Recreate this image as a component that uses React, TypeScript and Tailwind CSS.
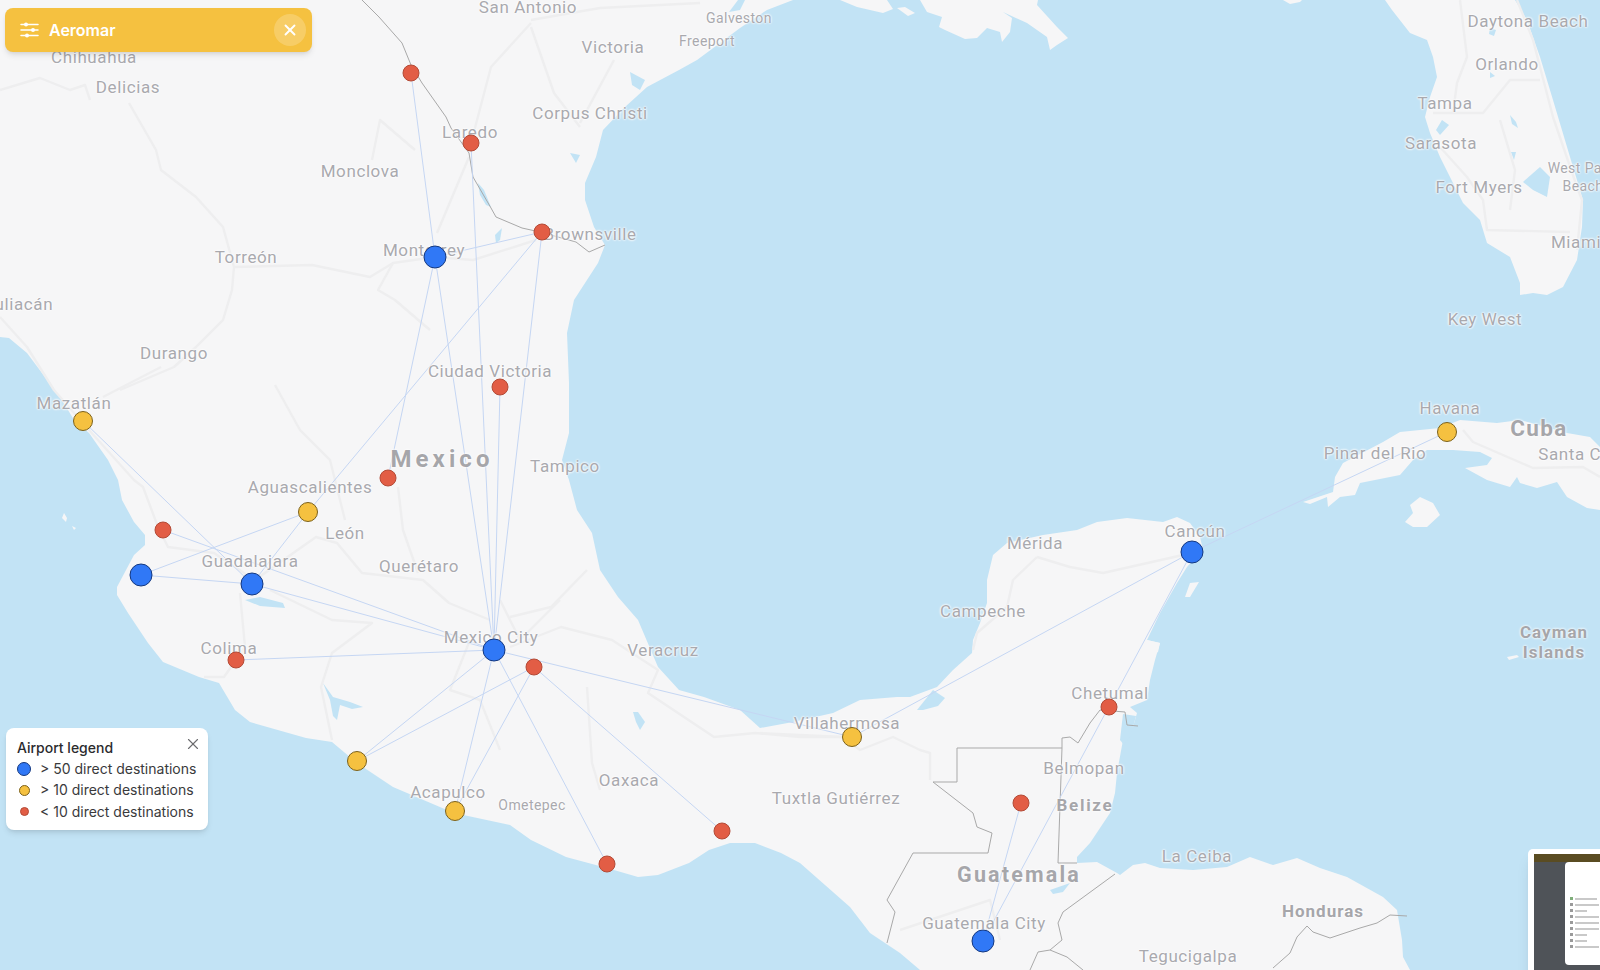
import { X } from "lucide-react";

const land =
  "0,0 793,0 767,10 740,28 720,43 697,60 679,70 647,87 625,107 603,130 596,157 585,183 585,200 594,227 605,245 598,263 574,300 567,333 569,383 569,433 562,460 569,480 577,510 592,533 600,570 618,597 638,620 658,667 679,690 704,697 740,710 760,728 793,722 833,713 860,700 897,697 910,697 937,687 953,670 972,653 973,640 980,623 987,603 987,580 993,555 1007,543 1043,535 1077,530 1097,522 1127,518 1163,522 1177,517 1190,523 1200,537 1203,550 1193,560 1187,567 1177,583 1160,613 1147,640 1160,643 1155,660 1150,680 1147,700 1130,707 1137,713 1133,727 1123,740 1117,773 1115,793 1110,813 1090,843 1077,857 1077,863 1097,862 1117,873 1120,875 1133,865 1145,863 1160,868 1193,870 1227,867 1250,857 1273,865 1297,858 1320,868 1347,877 1383,897 1397,910 1402,940 1403,957 1410,970 920,970 900,953 870,933 850,907 800,863 781,853 755,843 730,843 709,850 689,863 658,875 638,877 607,868 566,857 531,840 510,825 454,813 393,787 357,763 332,742 306,738 250,722 235,710 219,683 199,677 163,662 148,643 128,613 117,595 117,587 134,555 145,545 145,535 134,522 122,500 118,480 108,460 89,433 74,420 62,400 45,377 27,353 9,338 0,337";

const islands = [
  // louisiana
  "840,0 857,7 883,13 893,9 887,0",
  "897,8 905,7 915,13 908,16",
  "920,0 927,12 942,17 939,27 945,30 965,39 977,38 987,28 1000,32 1002,42 1010,32 1012,18 1003,12 1027,23 1047,37 1050,50 1057,45 1068,38 1057,27 1037,5 1038,0",
  "1283,0 1290,4 1300,2 1302,0",
  // florida
  "1385,0 1392,10 1410,33 1427,40 1433,57 1437,77 1430,97 1425,117 1430,133 1440,157 1450,177 1463,203 1480,220 1487,243 1510,257 1520,283 1520,295 1533,293 1547,295 1563,287 1577,260 1582,227 1583,200 1570,157 1553,100 1540,57 1527,20 1515,0",
  // cuba
  "1303,502 1333,492 1335,477 1343,463 1383,442 1400,432 1440,428 1460,420 1497,423 1520,420 1567,433 1590,437 1600,447 1600,510 1587,508 1567,497 1557,482 1537,488 1520,483 1517,477 1510,487 1487,480 1465,468 1487,465 1492,458 1480,452 1453,450 1427,450 1413,460 1400,475 1360,483 1355,495 1340,497 1328,507 1327,497 1310,504",
  "1405,522 1413,513 1410,505 1420,497 1433,503 1440,515 1427,527 1413,527",
  "1507,657 1517,655 1519,657 1509,660",
  // cozumel and the small ones
  "1185,597 1190,583 1199,582 1190,597",
  "1147,640 1160,643 1158,652 1150,655",
  "64,513 67,518 66,522 62,518",
  "72,526 76,528 74,530",
];

const lakes = [
  "917,710 933,690 945,698 938,706 923,710",
  "245,600 260,597 283,603 285,608 260,606",
  "323,683 328,690 333,697 350,702 363,707 352,709 340,705 337,720 333,716 330,700",
  "1050,890 1070,883 1063,892 1053,894",
  "478,183 484,190 491,207 486,205 480,195",
  "495,235 502,228 500,240 496,243",
  "1523,182 1540,167 1550,177 1547,197 1533,190",
  "1436,130 1442,120 1449,125 1440,135",
  "633,712 638,712 645,722 640,730 636,722",
  "630,72 645,80 640,90 632,85",
  "570,153 580,155 576,163",
  "729,12 738,0 745,0 740,10",
  "1490,28 1496,30 1494,36 1489,34",
  "1510,115 1516,122 1518,128 1512,124",
  "1511,152 1516,152 1514,160",
  "1490,72 1495,76 1490,78",
  "1123,714 1136,716 1131,735 1124,745 1120,740",
];

const roads = [
  "129,103 156,150 161,170 196,197 223,227 234,267 232,290 223,320 196,347 174,367 120,390",
  "234,267 312,265 370,277 393,263 435,257 473,260 536,240",
  "393,263 378,290 395,300 430,330",
  "437,233 469,157",
  "471,143 491,67 531,23",
  "531,27 554,93 580,127",
  "531,20 600,8 700,3",
  "103,397 161,367",
  "0,317 27,347 54,390 89,430 134,480 143,487 158,527 168,547 214,553 250,577",
  "255,580 316,537 337,543 362,573 423,580 449,603 490,620",
  "270,590 332,620 372,623 332,653 321,687 332,740",
  "240,593 245,647 224,677 204,677",
  "398,487 403,530 418,573",
  "510,647 561,627 612,640 658,670 648,693 714,737 755,733 800,737 852,737",
  "587,687 592,763 600,790",
  "510,617 551,607 587,570",
  "500,600 520,640 560,600",
  "470,640 450,690 480,700 500,750",
  "1037,557 1070,567 1103,573 1183,555",
  "1037,557 1013,580 1007,607 977,633 973,650",
  "760,733 843,737 860,750 893,737 920,750 930,753 930,780",
  "1460,0 1467,57 1457,83 1453,113",
  "1433,113 1483,113 1510,80 1540,80",
  "1517,0 1533,40 1553,117 1577,187 1582,200 1577,250",
  "1440,147 1467,177 1483,200 1487,230 1570,232",
  "1500,120 1515,170 1510,210",
  "1463,430 1473,442 1533,468 1583,467 1600,477",
  "614,60 580,123",
  "415,150 380,120 372,160",
  "275,385 300,430 330,460 345,520",
  "0,90 40,78 70,90 85,85 90,100",
  "900,930 990,900 1000,940",
];

const borders = [
  "362,0 379,17 402,43 411,65 422,83 446,117 451,128 469,153 473,177 491,208 496,217 522,228 540,232 576,242 589,252 605,245",
  "887,943 895,912 887,900 913,853 988,853 992,833 977,827 973,813 933,782 957,782 957,748 1062,748 1058,863 1077,863",
  "1062,748 1062,738 1070,737 1078,743 1090,723 1100,710 1125,712 1127,725 1138,726",
  "1115,874 1063,912 1058,923 1062,940 1050,950 1038,952 1030,970",
  "1050,950 1067,957 1083,970",
  "1407,916 1390,915 1377,923 1360,928 1330,938 1313,932 1307,926 1297,937 1290,953 1273,968",
];

const MTY = [435, 257], GDL = [252, 584], PVR = [141, 575], MEX = [494, 650], CUN = [1192, 552], GUA = [983, 941];
const MZT = [83, 421], AGU = [308, 512], VSA = [852, 737], ZIH = [357, 761], ACA = [455, 811], HAV = [1447, 432];
const NLD = [411, 73], LRD = [471, 143], BRO = [542, 232], CVM = [500, 387], SLP = [388, 478], TPQ = [163, 530];
const CLQ = [236, 660], PBC = [534, 667], HUX = [722, 831], PXM = [607, 864], CTM = [1109, 707], FRS = [1021, 803];

const routes = [
  [NLD, MTY], [MTY, MEX], [LRD, MEX], [BRO, MTY], [BRO, MEX], [BRO, AGU], [MTY, SLP], [CVM, MEX],
  [MZT, GDL], [TPQ, MEX], [GDL, MEX], [PVR, GDL], [PVR, AGU], [AGU, GDL], [CLQ, MEX],
  [MEX, ZIH], [PBC, ZIH], [MEX, ACA], [PBC, ACA], [MEX, PXM], [PBC, HUX], [MEX, VSA],
  [CUN, VSA], [GUA, CUN], [CUN, HAV], [GUA, FRS],
];

const markers = [
  { at: MTY, size: "big" }, { at: GDL, size: "big" }, { at: PVR, size: "big" }, { at: MEX, size: "big" }, { at: CUN, size: "big" }, { at: GUA, size: "big" },
  { at: MZT, size: "mid" }, { at: AGU, size: "mid" }, { at: VSA, size: "mid" }, { at: ZIH, size: "mid" }, { at: ACA, size: "mid" }, { at: HAV, size: "mid" },
  { at: NLD, size: "small" }, { at: LRD, size: "small" }, { at: BRO, size: "small" }, { at: CVM, size: "small" }, { at: SLP, size: "small" }, { at: TPQ, size: "small" },
  { at: CLQ, size: "small" }, { at: PBC, size: "small" }, { at: HUX, size: "small" }, { at: PXM, size: "small" }, { at: CTM, size: "small" }, { at: FRS, size: "small" },
];

const markerClass: Record<string, string> = {
  big: "w-[23px] h-[23px] bg-[#3078f6] border-[#14387f]",
  mid: "w-[20px] h-[20px] bg-[#f5c140] border-[#7c611b]",
  small: "w-[17px] h-[17px] bg-[#e25d45] border-[#b34a36]",
};

const cities: [string, number, number][] = [
  ["San Antonio", 528, 7], ["Victoria", 613, 47], ["Daytona Beach", 1528, 21], ["Orlando", 1507, 64],
  ["Tampa", 1445, 103], ["Sarasota", 1441, 143], ["Fort Myers", 1479, 187], ["Miami", 1576, 242], ["Key West", 1485, 319],
  ["Chihuahua", 94, 57], ["Delicias", 128, 87], ["Corpus Christi", 590, 113], ["Laredo", 470, 132], ["Monclova", 360, 171],
  ["Monterrey", 424, 250], ["Brownsville", 590, 234], ["Torreón", 246, 257], ["Culiacán", 18, 304], ["Durango", 174, 353],
  ["Ciudad Victoria", 490, 371], ["Mazatlán", 74, 403], ["Tampico", 565, 466], ["Aguascalientes", 310, 487], ["León", 345, 533],
  ["Guadalajara", 250, 561], ["Querétaro", 419, 566], ["Mexico City", 491, 637], ["Colima", 229, 648], ["Veracruz", 663, 650],
  ["Villahermosa", 847, 723], ["Acapulco", 448, 792], ["Oaxaca", 629, 780], ["Tuxtla Gutiérrez", 836, 798], ["Mérida", 1035, 543],
  ["Campeche", 983, 611], ["Cancún", 1195, 531], ["Chetumal", 1110, 693], ["Belmopan", 1084, 768], ["Guatemala City", 984, 923],
  ["La Ceiba", 1197, 856], ["Tegucigalpa", 1188, 956], ["Havana", 1450, 408], ["Pinar del Rio", 1375, 453], ["Santa Clara", 1585, 454],
];

const smallCities: [string, number, number][] = [
  ["Galveston", 739, 18], ["Freeport", 707, 41], ["Ometepec", 532, 805], ["West Palm", 1583, 168], ["Beach", 1583, 186],
];

const countries: [string, number, number, string][] = [
  ["Mexico", 442, 459, "text-[24px] tracking-[0.17em]"],
  ["Guatemala", 1019, 875, "text-[21.5px] tracking-[0.1em]"],
  ["Cuba", 1539, 428, "text-[22.5px] tracking-[0.06em]"],
  ["Belize", 1085, 805, "text-[17px] tracking-[0.1em]"],
  ["Honduras", 1323, 911, "text-[17px] tracking-[0.06em]"],
  ["Cayman", 1554, 632, "text-[17px] tracking-[0.06em]"],
  ["Islands", 1554, 652, "text-[17px] tracking-[0.06em]"],
];

function LegendRow({ dot, label }: { dot: string; label: string }) {
  return (
    <div className="flex items-center h-[21.5px]">
      <div className="w-[14px] flex justify-center">
        <div className={`rounded-full border ${dot}`} />
      </div>
      <span className="ml-[9px] text-[14px] leading-none text-[#3a3a3c]">{label}</span>
    </div>
  );
}

export default function App() {
  return (
    <div className="relative w-[1600px] h-[970px] overflow-hidden bg-[#c2e3f5] font-['Inter',sans-serif]">
      <svg className="absolute inset-0" width="1600" height="970" viewBox="0 0 1600 970" fill="none" strokeLinejoin="round">
        <polygon points={land} fill="#f6f6f7" />
        {islands.map((p) => (
          <polygon key={p} points={p} fill="#f6f6f7" />
        ))}
        {lakes.map((p) => (
          <polygon key={p} points={p} fill="#c2e3f5" />
        ))}
        {roads.map((p) => (
          <polyline key={p} points={p} stroke="#eeeeef" strokeWidth="2.4" />
        ))}
        {borders.map((p) => (
          <polyline key={p} points={p} stroke="#a9a9a9" strokeWidth="1" />
        ))}
        {routes.map(([a, b], i) => (
          <line key={i} x1={a[0]} y1={a[1]} x2={b[0]} y2={b[1]} stroke="#c5d6f3" strokeWidth="1" />
        ))}
      </svg>

      <div className="absolute inset-0 font-['Roboto',sans-serif] text-[#a9a9ae]">
        {cities.map(([name, x, y]) => (
          <span
            key={name + y}
            className="absolute -translate-x-1/2 -translate-y-1/2 whitespace-nowrap text-[17px] leading-none tracking-[0.035em] [text-shadow:0_0_2px_#fff,0_0_2px_#fff,0_0_3px_#fff]"
            style={{ left: x, top: y }}
          >
            {name}
          </span>
        ))}
        {smallCities.map(([name, x, y]) => (
          <span
            key={name}
            className="absolute -translate-x-1/2 -translate-y-1/2 whitespace-nowrap text-[14px] leading-none tracking-[0.03em] [text-shadow:0_0_2px_#fff,0_0_2px_#fff,0_0_3px_#fff]"
            style={{ left: x, top: y }}
          >
            {name}
          </span>
        ))}
        {countries.map(([name, x, y, size]) => (
          <span
            key={name}
            className={`absolute -translate-x-1/2 -translate-y-1/2 whitespace-nowrap font-bold leading-none text-[#a6a6aa] [text-shadow:0_0_2px_#fff,0_0_3px_#fff] ${size}`}
            style={{ left: x, top: y }}
          >
            {name}
          </span>
        ))}
      </div>

      {markers.map((m, i) => (
        <div
          key={i}
          className={`absolute -translate-x-1/2 -translate-y-1/2 rounded-full border ${markerClass[m.size]}`}
          style={{ left: m.at[0], top: m.at[1] }}
        />
      ))}

      <div className="absolute left-[5px] top-[8px] w-[307px] h-[44px] rounded-lg bg-[#f5c140] shadow-md flex items-center pl-[15px] pr-[6px]">
        <svg width="19" height="18" viewBox="0 0 19 18" fill="none" stroke="#fff" strokeWidth="1.5" strokeLinecap="round">
          <path d="M1 3.5h17M1 9h17M1 14.5h17" />
          <circle cx="6" cy="3.5" r="2" fill="#fff" stroke="none" />
          <circle cx="13" cy="9" r="2" fill="#fff" stroke="none" />
          <circle cx="7" cy="14.5" r="2" fill="#fff" stroke="none" />
        </svg>
        <span className="ml-[10px] text-[16px] font-semibold text-white">Aeromar</span>
        <button className="ml-auto w-[32px] h-[32px] rounded-full bg-white/20 flex items-center justify-center">
          <X size={18} color="#fff" strokeWidth={2.5} />
        </button>
      </div>

      <div className="absolute left-[6px] top-[728px] w-[202px] h-[102px] rounded-lg bg-white shadow-md pl-[11px] pt-[9px]">
        <div className="flex items-center h-[20px]">
          <span className="text-[14px] font-medium text-[#2b2b2d]">Airport legend</span>
          <X className="ml-auto mr-[6px] -mt-[6px]" size={18} color="#6b6b6e" strokeWidth={1.5} />
        </div>
        <div className="mt-[1px]">
          <LegendRow dot="w-[14px] h-[14px] bg-[#3078f6] border-[#14387f]" label="> 50 direct destinations" />
          <LegendRow dot="w-[11px] h-[11px] bg-[#f5c140] border-[#7c611b]" label="> 10 direct destinations" />
          <LegendRow dot="w-[9px] h-[9px] bg-[#e25d45] border-[#b34a36]" label="< 10 direct destinations" />
        </div>
      </div>

      <div className="absolute left-[1528px] top-[849px] w-[80px] h-[130px] rounded-[5px] bg-white shadow-lg pl-[6px] pt-[5px]">
        <div className="relative w-full h-full bg-[#4f5358]">
          <div className="h-[8px] bg-[#5a4c22]" />
          <div className="absolute left-[31px] top-[8px] w-[60px] h-[103px] rounded-sm bg-white flex flex-col gap-[3px] pl-[5px] pt-[35px]">
            {[22, 24, 12, 24, 24, 24, 12, 12, 24].map((w, i) => (
              <div key={i} className="flex items-center gap-[2px]">
                <div className={`w-[3px] h-[3px] ${i === 0 ? "bg-[#7fae7a]" : "bg-[#9a9a9a]"}`} />
                <div className="h-[2px] bg-[#c9c9c9]" style={{ width: w }} />
              </div>
            ))}
          </div>
        </div>
      </div>
    </div>
  );
}
